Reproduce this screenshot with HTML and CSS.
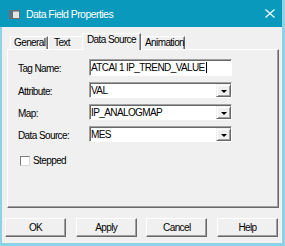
FILE: index.html
```html
<!DOCTYPE html>
<html>
<head>
<meta charset="utf-8">
<link rel="stylesheet" href="styles.css">
</head>
<body>
<div class="window">
  <div class="titlebar">
    <svg class="app-icon" width="11" height="9" viewBox="0 0 11 9">
      <rect x="0.5" y="0.5" width="10" height="8" fill="#e4e4e4" stroke="#6d6d6d"/>
      <rect x="1" y="1" width="3" height="7" fill="#5d6f82"/>
      <rect x="4" y="1" width="6" height="1" fill="#9aa4ae"/>
    </svg>
    <span class="title">Data Field Properties</span>
    <svg class="close" width="10" height="9" viewBox="0 0 10 9">
      <path d="M0.5 0.5 L9.5 8.5 M9.5 0.5 L0.5 8.5" stroke="#ffffff" stroke-width="1.1" fill="none"/>
    </svg>
  </div>
  <div class="client">
    <div class="tabs">
      <div class="tab tab-general">General</div>
      <div class="tab tab-text">Text</div>
      <div class="tab tab-source selected">Data Source</div>
      <div class="tab tab-anim">Animation</div>
    </div>
    <div class="panel">
      <div class="form">
        <label class="lbl">Tag Name:</label>
        <div class="edit">ATCAI 1 IP_TREND_VALUE<span class="caret"></span></div>
        <label class="lbl">Attribute:</label>
        <div class="combo"><span class="val">VAL</span><span class="drop"><i class="arrow"></i></span></div>
        <label class="lbl">Map:</label>
        <div class="combo"><span class="val">IP_ANALOGMAP</span><span class="drop"><i class="arrow"></i></span></div>
        <label class="lbl">Data Source:</label>
        <div class="combo"><span class="val">MES</span><span class="drop"><i class="arrow"></i></span></div>
      </div>
      <div class="check"><span class="box"></span><span class="check-label">Stepped</span></div>
    </div>
    <div class="buttons">
      <button class="btn">OK</button>
      <button class="btn">Apply</button>
      <button class="btn">Cancel</button>
      <button class="btn">Help</button>
    </div>
  </div>
</div>
</body>
</html>
```

FILE: styles.css
```css
html, body {
  margin: 0;
  padding: 0;
}
body {
  width: 285px;
  height: 246px;
  overflow: hidden;
  background: #8ed2e6;
  font-family: "Liberation Sans", Arial, sans-serif;
  font-size: 10px;
  letter-spacing: -0.6px;
  color: #000;
}
.window {
  width: 282px;
  height: 243px;
  display: flex;
  flex-direction: column;
}
.titlebar {
  height: 27px;
  flex: none;
  background: #0899bd;
  display: flex;
  align-items: center;
  color: #fff;
}
.app-icon {
  margin-left: 9px;
  margin-top: 1px;
  flex: none;
}
.title {
  margin-left: 6px;
  font-size: 10.5px;
  letter-spacing: -0.55px;
  margin-top: 1px;
}
.close {
  margin-left: auto;
  margin-right: 7px;
  flex: none;
}
.client {
  flex: 1;
  margin-left: 2px;
  background: #f0f0f0;
  padding-top: 6px;
  display: flex;
  flex-direction: column;
}
.tabs {
  display: flex;
  align-items: flex-end;
  height: 16px;
  padding-left: 8px;
  position: relative;
  z-index: 1;
}
.tab {
  box-sizing: border-box;
  height: 13px;
  border-top: 1px solid #fff;
  border-left: 1px solid #fff;
  border-right: 1px solid #696969;
  box-shadow: inset -1px 0 #a0a0a0;
  line-height: 11px;
  padding-left: 3px;
  white-space: nowrap;
  background: #f0f0f0;
}
.tab-general { width: 38px; }
.tab-text { width: 34px; padding-left: 5px; border-right: none; box-shadow: none; }
.tab-source { width: 59px; padding-left: 4px; }
.tab-anim { width: 44px; }
.tab.selected {
  height: 17px;
  margin-bottom: -1px;
  line-height: 12px;
}
.panel {
  box-sizing: border-box;
  margin-left: 5px;
  width: 272px;
  height: 159px;
  border-top: 1px solid #fff;
  border-left: 1px solid #fff;
  border-right: 1px solid #696969;
  border-bottom: 1px solid #696969;
  box-shadow: inset -1px -1px #a0a0a0;
  padding: 9px 0 0 10px;
}
.form {
  display: grid;
  grid-template-columns: 71px 143px;
  row-gap: 6px;
  align-items: center;
}
.lbl {
  padding-top: 2px;
}
.edit, .combo {
  box-sizing: border-box;
  background: #fff;
  border: 1px solid;
  border-color: #a0a0a0 #fff #fff #a0a0a0;
  box-shadow: inset 1px 1px #696969;
  display: flex;
  align-items: center;
  white-space: nowrap;
}
.edit {
  height: 17px;
  padding-left: 1px;
}
.caret {
  display: inline-block;
  width: 1px;
  height: 11px;
  background: #000;
  margin-left: 1px;
}
.combo {
  height: 16px;
  padding: 1px 0 0 1px;
}
.val {
  flex: 1;
}
.drop {
  box-sizing: border-box;
  width: 15px;
  height: 13px;
  background: #f0f0f0;
  border: 1px solid;
  border-color: #f0f0f0 #696969 #696969 #f0f0f0;
  box-shadow: inset 1px 1px #fff, inset -1px -1px #a0a0a0;
  display: flex;
  align-items: center;
  justify-content: center;
}
.arrow {
  width: 0;
  height: 0;
  border-left: 3px solid transparent;
  border-right: 3px solid transparent;
  border-top: 3px solid #000;
  margin-top: 1px;
}
.check {
  display: flex;
  align-items: center;
  margin-top: 13px;
}
.box {
  box-sizing: border-box;
  width: 10px;
  height: 10px;
  margin-left: 2px;
  background: #fff;
  border: 1px solid;
  border-color: #7a7a7a #d8d8d8 #d8d8d8 #7a7a7a;
}
.check-label {
  margin-left: 3px;
}
.buttons {
  display: flex;
  justify-content: space-between;
  margin: 10px 4px 0 3px;
}
.btn {
  box-sizing: border-box;
  width: 61px;
  height: 19px;
  padding: 0;
  font: inherit;
  letter-spacing: inherit;
  color: #000;
  background: #f0f0f0;
  border: 1px solid;
  border-color: #fff #696969 #696969 #fff;
  box-shadow: inset -1px -1px #a0a0a0;
}
```
